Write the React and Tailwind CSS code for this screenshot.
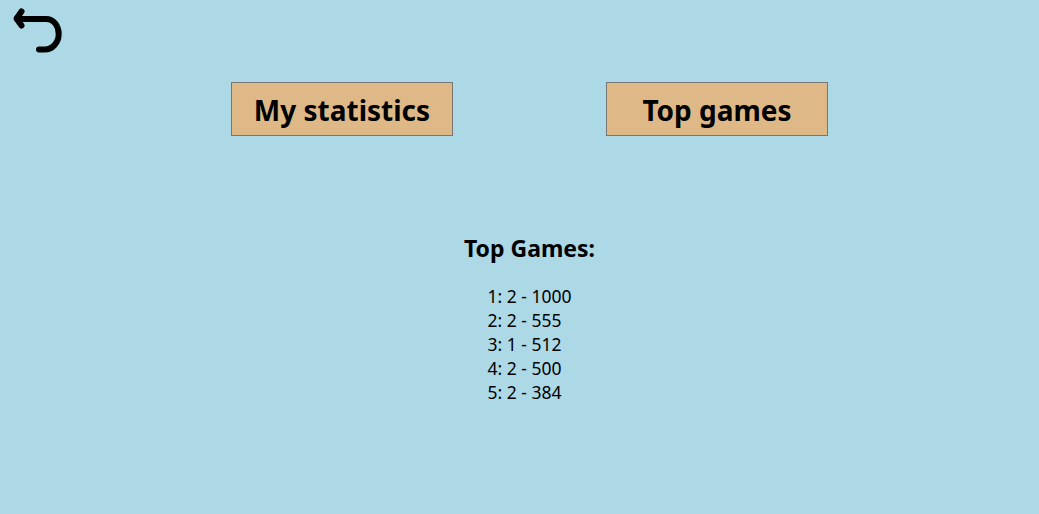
import React from 'react';

const rows = ['1: 2 - 1000', '2: 2 - 555', '3: 1 - 512', '4: 2 - 500', '5: 2 - 384'];

function BackIcon() {
  return (
    <svg width="64" height="56" viewBox="0 0 64 56" fill="none" stroke="#000" strokeWidth="6" strokeLinecap="round" strokeLinejoin="round" aria-hidden="true">
      <path d="M21.5 11.5 L16.5 18.5 L21.5 25.5" />
      <path d="M17 19 H46 C54 19 58.7 26 58.7 34 C58.7 43 52 49.5 45 49.5 H39" />
    </svg>
  );
}

function TabButton({ label }) {
  return (
    <button className="w-[222px] h-[54px] pt-0.5 bg-[#deb887] border border-[#767676] text-[28px] font-bold text-black leading-none">
      {label}
    </button>
  );
}

export default function App() {
  return (
    <div className="h-screen overflow-hidden bg-[#add8e6] text-black font-['Noto_Sans','Open_Sans',sans-serif]">
      <div className="h-[82px]">
        <BackIcon />
      </div>
      <div className="flex flex-col items-center pl-5">
        <div className="flex gap-[153px]">
          <TabButton label="My statistics" />
          <TabButton label="Top games" />
        </div>
        <h2 className="mt-[95px] text-[23px] leading-[34px] font-bold">Top Games:</h2>
        <div className="mt-[19px] text-[17.5px] leading-6">
          {rows.map((r) => (
            <div key={r}>{r}</div>
          ))}
        </div>
      </div>
    </div>
  );
}
